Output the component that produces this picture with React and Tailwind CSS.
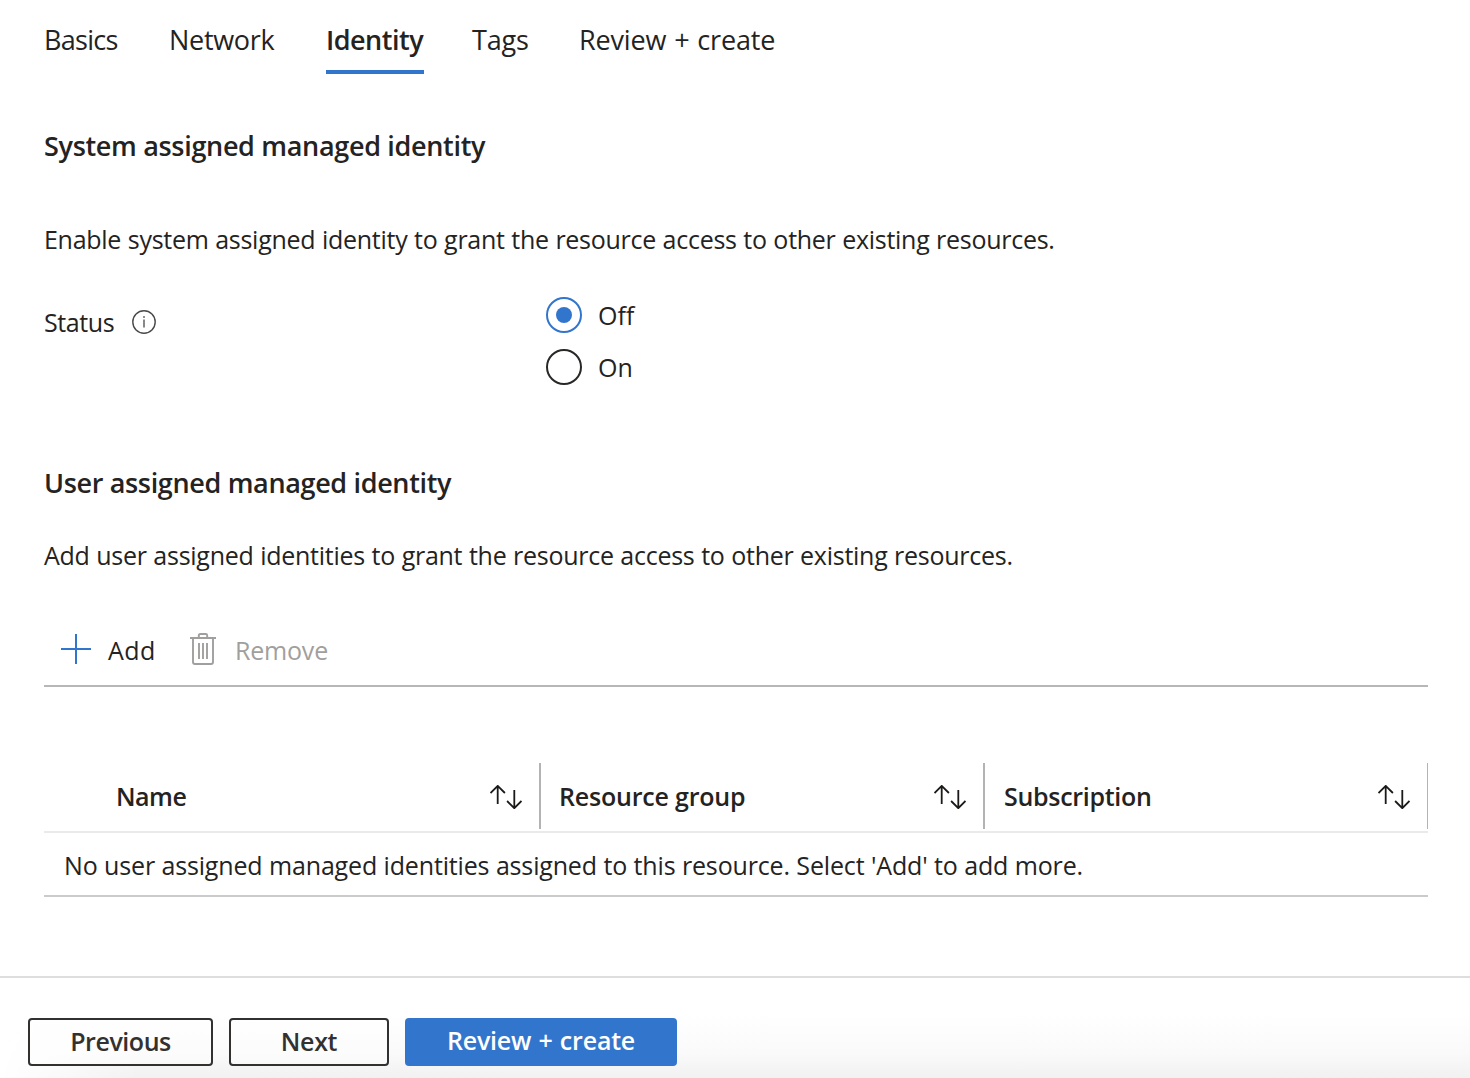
import React from "react";

const tabs = [
  { label: "Basics", cls: "w-[125px] tracking-[-0.7px]" },
  { label: "Network", cls: "w-[157px] tracking-[-0.3px]" },
  { label: "Identity", active: true, cls: "w-[98px] mr-[48px] font-semibold tracking-[-0.5px]" },
  { label: "Tags", cls: "w-[107px] tracking-[-0.2px]" },
  { label: "Review + create", cls: "tracking-[-0.15px] [word-spacing:1px]" },
];

const columns = [
  { label: "Name", cls: "w-[497px] pl-[72px] border-r-2 pr-[17px] tracking-[-0.5px]" },
  { label: "Resource group", cls: "w-[444px] pl-[18px] border-r-2 pr-[17px] tracking-[-0.2px]" },
  { label: "Subscription", cls: "w-[443px] pl-[19px] border-r pr-[17px] tracking-[-0.3px]" },
];

function InfoIcon() {
  return (
    <svg className="size-6" viewBox="0 0 24 24" fill="none">
      <circle cx="12" cy="12" r="11.2" stroke="#4b4a48" strokeWidth="1.4" />
      <path d="M12 9.6V17.6" stroke="#6b6a68" strokeWidth="1.6" />
      <circle cx="12" cy="7" r="1" fill="#6b6a68" />
    </svg>
  );
}

function PlusIcon() {
  return (
    <svg className="mt-[2px] h-[30px] w-[30px]" viewBox="0 0 30 30" fill="none" stroke="#3275cd" strokeWidth="2">
      <path d="M15 0V30M0 15H30" />
    </svg>
  );
}

function TrashIcon() {
  return (
    <svg className="mt-[2px] h-8 w-[26px]" viewBox="0 0 26 32" fill="none" stroke="#a09f9d" strokeWidth="1.9">
      <path d="M0 5H26M8.8 5V2.5Q8.8 1 10.3 1H15.7Q17.2 1 17.2 2.5V5" />
      <path d="M3 5V29Q3 31 5 31H21Q23 31 23 29V5" />
      <path d="M9 10V26M13 10V26M17 10V26" />
    </svg>
  );
}

function SortIcon() {
  return (
    <svg className="mt-[2px] h-6 w-8 shrink-0" viewBox="0 0 32 24" fill="none" stroke="#1b1a19" strokeWidth="1.8">
      <path d="M7.7 19V0.9M0.5 8L7.7 0.9L14.9 8" />
      <path d="M24.3 5V23.2M17.1 16L24.3 23.2L31.5 16" />
    </svg>
  );
}

function Radio({ label, checked }) {
  return (
    <label className="flex h-10 items-center gap-4">
      <span
        className={
          checked
            ? "flex size-9 items-center justify-center rounded-full border-2 border-[#3275cd]"
            : "size-9 rounded-full border-2 border-[#292827]"
        }
      >
        {checked && <span className="size-4 rounded-full bg-[#3275cd]" />}
      </span>
      <span>{label}</span>
    </label>
  );
}

export default function App() {
  return (
    <div className="flex h-[1078px] w-[1470px] flex-col overflow-hidden bg-white font-['Open_Sans',sans-serif] text-[25px] leading-10 text-[#242322]">
      <main className="flex h-[976px] flex-col pr-[42px] pl-[44px]">
        <nav className="flex pt-5 text-[27px] whitespace-nowrap">
          {tabs.map((t) => (
            <div key={t.label} className={t.cls}>
              {t.label}
              <div className={t.active ? "mt-[10px] h-1 bg-[#3275cd]" : "mt-[10px] h-1"} />
            </div>
          ))}
        </nav>

        <h2 className="mt-[52px] text-[27px] font-semibold tracking-[-0.32px]">System assigned managed identity</h2>
        <p className="mt-[53px] tracking-[-0.27px] [word-spacing:0.4px]">
          Enable system assigned identity to grant the resource access to other existing resources.
        </p>

        <div className="mt-[36px] flex items-start">
          <div className="mt-[7px] flex w-[502px] items-center">
            <span className="w-[88px] tracking-[-0.4px]">Status</span>
            <InfoIcon />
          </div>
          <div className="flex flex-col gap-3">
            <Radio label="Off" checked />
            <Radio label="On" />
          </div>
        </div>

        <h2 className="mt-[76px] text-[27px] font-semibold tracking-[-0.34px]">User assigned managed identity</h2>
        <p className="mt-8 tracking-[-0.26px] [word-spacing:0.4px]">
          Add user assigned identities to grant the resource access to other existing resources.
        </p>

        <div className="mt-[50px] flex h-[62px] items-center border-b-2 border-[#b7b7b7] pb-[14px] pl-[17px]">
          <PlusIcon />
          <span className="mt-1 ml-[17px] w-[82px] tracking-[0.4px]">Add</span>
          <TrashIcon />
          <span className="mt-1 ml-[19px] tracking-[-0.2px] text-[#a19f9d]">Remove</span>
        </div>

        <div className="mt-[76px] flex h-[70px] border-b-2 border-[#eaeaea] font-semibold">
          {columns.map((c) => (
            <div key={c.label} className="flex h-[66px]">
              <div className={`${c.cls} flex items-center justify-between border-[#b3b3b3]`}>
                <span>{c.label}</span>
                <SortIcon />
              </div>
            </div>
          ))}
        </div>
        <div className="h-16 border-b-2 border-[#cbcbcb] pt-3 pl-5 tracking-[-0.16px] [word-spacing:0.2px]">
          No user assigned managed identities assigned to this resource. Select 'Add' to add more.
        </div>
      </main>

      <footer className="flex h-[102px] gap-4 border-t-2 border-[#dedede] bg-[linear-gradient(to_right,#ffffff,transparent_140px),linear-gradient(to_bottom,#ffffff_35%,#fafafa_75%,#f1f1f1)] pt-10 pl-7 font-semibold text-[#323130]">
        <button className="h-12 w-[185px] rounded-[4px] border-2 border-[#323130] bg-white/40 pb-[3px] leading-[40px] tracking-[-0.45px]">Previous</button>
        <button className="h-12 w-[160px] rounded-[4px] border-2 border-[#323130] bg-white/40 pb-[3px] leading-[40px] tracking-[-0.3px]">Next</button>
        <button className="h-12 w-[272px] rounded-[4px] bg-[#3275cd] pb-1 leading-[44px] tracking-[-0.2px] [word-spacing:1px] text-white">Review + create</button>
      </footer>
    </div>
  );
}
